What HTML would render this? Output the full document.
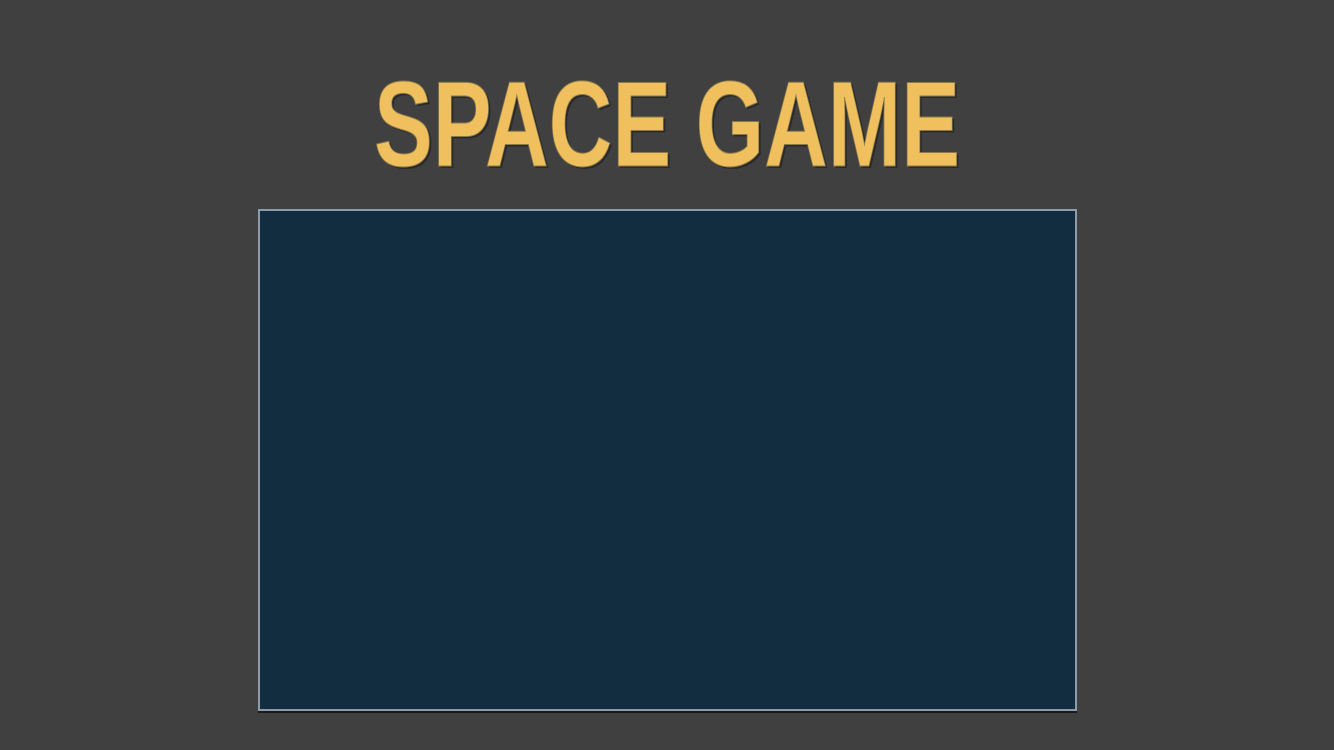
<!DOCTYPE html>
<html><head><meta charset="utf-8"><style>
html,body{margin:0;padding:0;background:#404040;width:1334px;height:750px;overflow:hidden}
.box{position:absolute;left:258px;top:209px;width:815px;height:498px;background:#122d40;border:2px solid #8d9ca8;box-shadow:0 2px 0 #1a1a1a}
svg{position:absolute;left:0;top:0}
</style></head><body>
<svg width="1334" height="200">
<text x="376" y="168" textLength="586" lengthAdjust="spacingAndGlyphs" font-family="Liberation Sans, sans-serif" font-weight="bold" font-size="122" fill="#2a2a2a">SPACE GAME</text>
<text x="374" y="166" textLength="586" lengthAdjust="spacingAndGlyphs" font-family="Liberation Sans, sans-serif" font-weight="bold" font-size="122" fill="#f0c05e" stroke="#8a7a4a" stroke-width="1">SPACE GAME</text>
</svg>
<div class="box"></div>
</body></html>
